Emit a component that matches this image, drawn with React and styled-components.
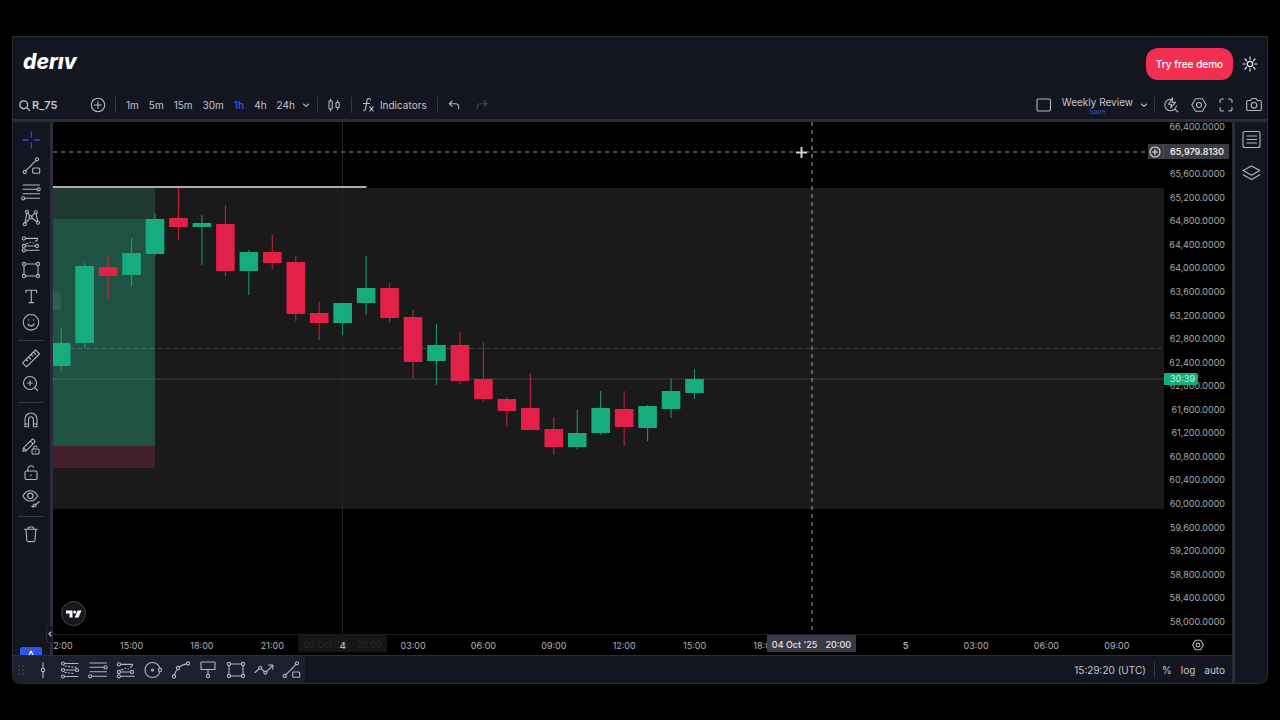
import React from "react";
import styled, { createGlobalStyle } from "styled-components";

const GlobalStyle = createGlobalStyle`
  * { box-sizing: border-box; }
  body { margin: 0; background: #000; font-family: Inter, "Liberation Sans", sans-serif; }
  button { font: inherit; color: inherit; background: none; border: 0; padding: 0; cursor: pointer; }
`;

const c = {
  panel: "#131520",
  line: "#2b2c38",
  edge: "#2a2b33",
  text: "#c3c5ce",
  icon: "#b4b7c2",
  blue: "#3350cf",
  up: "#17ac7e",
  down: "#e2204a",
};

/* ---------- shell ---------- */
const Page = styled.div`
  min-height: 100vh;
  padding: 36px 12px;
  display: flex;
  flex-direction: column;
`;
const Frame = styled.main`
  flex: 1;
  display: flex;
  flex-direction: column;
  background: ${c.panel};
  border: 1px solid ${c.edge};
  border-radius: 0 0 8px 8px;
  overflow: hidden;
  color: ${c.text};
`;
const Header = styled.header`
  height: 54px;
  padding: 0 9px 0 10px;
  display: flex;
  align-items: center;
`;
const Logo = styled.a`
  margin-right: auto;
  padding-bottom: 5px;
  color: #fff;
  text-decoration: none;
  font-size: 21px;
  line-height: 24px;
  font-weight: 800;
  font-style: italic;
`;
const DemoButton = styled.button`
  height: 32px;
  width: 87px;
  margin-right: 9px;
  border-radius: 12px;
  background: #f22f50;
  color: #fff;
  font-size: 10px;
  font-weight: 500;
`;
const IconButton = styled.button`
  width: ${(p) => p.$w || 28}px;
  height: ${(p) => p.$h || 28}px;
  color: ${(p) => p.$color || c.icon};
  display: flex;
  flex-shrink: 0;
  align-items: center;
  justify-content: center;
`;
const Toolbar = styled.div`
  height: 31px;
  display: flex;
  align-items: center;
  padding: 0 0 0 6px;
  border-bottom: 3px solid ${c.line};
  font-size: 10px;
  line-height: 14px;
`;
const SymbolButton = styled.button`
  width: 71px;
  display: flex;
  align-items: center;
  gap: 2px;
  font-size: 11px;
  font-weight: 600;
`;
const Rule = styled.span`
  width: 1px;
  height: 16px;
  flex-shrink: 0;
  background: #363945;
`;
const Intervals = styled.div`
  display: flex;
  gap: 10px;
  margin-left: 9px;
  padding-left: 10px;
  border-left: 1px solid #363945;
`;
const Interval = styled.button`
  color: ${(p) => (p.$on ? c.blue : c.text)};
  font-weight: ${(p) => (p.$on ? 600 : 400)};
  line-height: 16px;
`;
const IndicatorsButton = styled.button`
  display: flex;
  align-items: center;
  gap: 2px;
  padding: 0 10px 0 6px;
  line-height: 16px;
`;
const Spacer = styled.span`flex: 1;`;
const LayoutName = styled.button`
  padding: 2px 0 0 4px;
  display: flex;
  flex-direction: column;
  align-items: center;
  line-height: 11px;
`;
const SaveText = styled.span`
  font-size: 7px;
  line-height: 8px;
  color: ${c.blue};
`;

/* ---------- workspace ---------- */
const Workspace = styled.div`
  flex: 1;
  display: grid;
  grid-template-columns: 1fr 35px;
`;
const Left = styled.section`
  display: grid;
  grid-template-columns: 40px 1fr;
  grid-template-rows: 1fr 28px;
  min-width: 0;
`;
const ToolRail = styled.nav`
  position: relative;
  border-right: 3px solid ${c.line};
  padding-top: 5px;
  display: flex;
  flex-direction: column;
`;
const RailRule = styled.span`
  height: 1px;
  margin: 5px 7px 4px 5px;
  background: #363945;
`;
const BlueTab = styled.button`
  background: #2f55e8;
  color: #fff;
  width: 22px;
  height: 8px;
  margin: auto 0 0 7px;
  border-radius: 2px 2px 0 0;
  display: flex;
  justify-content: center;
`;
const Collapse = styled.button`
  position: absolute;
  right: -3px;
  bottom: 12px;
  width: 7px;
  height: 18px;
  background: ${c.panel};
  border: 1px solid ${c.line};
  border-radius: 3px 0 0 3px;
  display: flex;
  align-items: center;
  justify-content: center;
`;
const ChartArea = styled.div`
  position: relative;
  display: grid;
  grid-template-columns: 1fr 68px;
  grid-template-rows: 1fr 21px;
  background: #000;
  border-radius: 4px 4px 0 0;
  overflow: hidden;
  min-width: 0;
`;
const Plot = styled.div`
  position: relative;
  min-width: 0;
  overflow: hidden;
  svg.candles { display: block; width: 100%; height: 100%; }
`;
const PriceAxis = styled.div`
  display: flex;
  flex-direction: column;
  justify-content: space-between;
  padding: 1px 7px 8px 0;
  text-align: right;
  font-size: 9px;
  line-height: 8px;
  color: #a9a9ab;
  span { height: 8px; }
`;
const TimeAxis = styled.div`
  border-top: 1px solid #1d1d1f;
  overflow: hidden;
  min-width: 0;
`;
const TimeGrid = styled.div`
  display: grid;
  grid-template-columns: repeat(16, 1fr);
  margin: 0 12px 0 -27px;
  text-align: center;
  font-size: 9px;
  line-height: 21px;
  color: #b2b2b4;
`;
const TimeLabel = styled.span`
  position: relative;
  z-index: ${(p) => (p.$bold ? 2 : 0)};
  font-weight: ${(p) => (p.$bold ? 600 : 400)};
`;
const AxisCorner = styled.div`
  border-top: 1px solid #1d1d1f;
  display: flex;
  align-items: center;
  justify-content: center;
`;
const TimeBadge = styled.div`
  position: absolute;
  bottom: 3px;
  left: ${(p) => p.$x}px;
  width: 89px;
  height: 17px;
  display: flex;
  justify-content: center;
  gap: 8px;
  font-size: 9px;
  line-height: 19px;
  font-weight: ${(p) => (p.$ghost ? 400 : 500)};
  color: ${(p) => (p.$ghost ? "#29292b" : "#e6e6ea")};
  background: ${(p) => (p.$ghost ? "#161617" : "#3a3a46")};
`;
const PriceBadge = styled.div`
  position: absolute;
  top: 22px;
  right: 3px;
  height: 15px;
  display: flex;
  font-size: 9px;
  line-height: 15px;
  font-weight: 600;
  color: #e8e8e8;
  background: #3b3b40;
  span { padding: 0 5px 0 6px; border-left: 1px solid #505056; }
`;
const Countdown = styled.div`
  position: absolute;
  top: 251px;
  right: 34px;
  width: 34px;
  height: 12px;
  padding-left: 6px;
  border-radius: 0 2px 2px 0;
  font-size: 9px;
  line-height: 12px;
  color: #c4f5e3;
  background: ${c.up};
`;
const Watermark = styled.a`
  position: absolute;
  left: 8px;
  bottom: 8px;
  width: 25px;
  height: 25px;
  border-radius: 50%;
  border: 1px solid #45464c;
  background: #17181c;
  display: flex;
  align-items: center;
  justify-content: center;
`;
const BottomBar = styled.footer`
  grid-column: 1 / -1;
  border-top: 1px solid ${c.line};
  display: flex;
  align-items: center;
  font-size: 10px;
`;
const Favourites = styled.div`
  width: 292px;
  height: 100%;
  display: flex;
  align-items: center;
  background: #1c1f2c;
`;
const FavButton = styled.button`
  flex: 1;
  height: 27px;
  color: ${c.icon};
  display: flex;
  align-items: center;
  justify-content: center;
`;
const Grip = styled.span`
  width: 16px;
  display: flex;
  justify-content: center;
`;
const Clock = styled.button`padding-right: 8px;`;
const ScaleModes = styled.div`
  display: flex;
  gap: 9px;
  padding: 0 7px;
`;
const RightRail = styled.aside`
  border-left: 3px solid ${c.line};
  padding-top: 1px;
`;

/* ---------- icons ---------- */
const Svg = ({ w = 20, h = w, vb, children, sw = 1.1 }) => (
  <svg width={w} height={h} viewBox={vb || `0 0 ${w} ${h}`} fill="none" stroke="currentColor"
    strokeWidth={sw} strokeLinecap="round" strokeLinejoin="round" aria-hidden="true">
    {children}
  </svg>
);
const Dots = ({ at, r = 1.6 }) => at.map(([x, y]) => <circle key={`${x}-${y}`} cx={x} cy={y} r={r} />);

const icons = {
  cross: <path d="M2 10h5M13.5 10h5M10.3 2v5M10.3 13v5" strokeWidth="1.3" />,
  trend: <><Dots at={[[3.7, 16], [16, 3.3]]} /><path d="M5 14.7 14.8 4.6" /><rect x="11.7" y="12" width="7" height="5.3" rx="1" /></>,
  fib: <><path d="M2 3h16.5M2 7.3h14M2 11.7h16.5M3.8 16.3h14.7" /><Dots at={[[17.6, 7.3], [2.2, 16.3]]} /></>,
  pattern: <><Dots at={[[6, 3.7], [14.7, 4.3], [9.6, 9.2], [3.7, 16.3], [17, 14.7]]} r={1.5} /><path d="M5.8 5.2 4 14.8M6.8 5 8.8 7.9M13.5 5.3l-2.8 2.8M15 5.8l1.700 7.400M11 10l4.800 3.800M8.700 10.400l-4.100 4.800" /></>,
  forecast: <><Dots at={[[2.9, 4.4], [2.9, 12], [16, 12], [2.9, 16.3]]} /><path d="M4.6 4.4h12M4.6 12h9.800M4.6 16.3h13.600" /><path d="M5 9.500l2 .2M9 8.500l.5-.2M12 8.800l.5.2M14.500 7.200l2-1.500" /></>,
  rect: <><Dots at={[[3, 4], [17, 4], [3, 16], [17, 16]]} /><path d="M4.6 4h10.8M4.6 16h10.8M3 5.6v8.8M17 5.6v8.8" /></>,
  text: <path d="M5 6.5V4.3h10.600v2.200M10.300 4.300V16.600M8 16.600h4.600" />,
  smile: <><circle cx="10" cy="10.3" r="7.8" /><path d="M7 12c.6 1.400 1.700 2 3 2s2.400-.6 3-2M7.600 8h.01M12.400 8h.01" strokeWidth="1.3" /></>,
  ruler: <path d="M1.5 14.9 14.5 2l4 4L5.5 18.8zM5 11.5l1.5 1.5M7.5 9l2.2 2.2M10 6.5 11.5 8M12.5 4.1l2.2 2.2" />,
  zoom: <><circle cx="9" cy="9" r="6.5" /><path d="m13.700 13.700 3 3M9 6.500v5M6.500 9h5" /></>,
  magnet: <path d="M4 16.800V9a6 6 0 0 1 12 0v7.800h-3.600V9.200a2.400 2.400 0 0 0-4.800 0v7.600zM4 14h3.600M12.400 14H16" />,
  pencilLock: <><path d="M1.900 15.200l.6-3.400L10.800 3.600a1.300 1.300 0 0 1 1.800 0l1 1a1.300 1.300 0 0 1 0 1.800L5.400 14.600zM9.300 5.100l2.800 2.800M2.500 11.800l2.900 2.800" /><rect x="11" y="13" width="7" height="5" rx="1" /><path d="M12.700 13v-1.500a1.700 1.700 0 0 1 3.200-.6M14.500 15.200v.6" /></>,
  lock: <><rect x="4" y="9" width="12" height="8.500" rx="1.500" /><path d="M6.800 9V7a3.200 3.200 0 0 1 5.900-1.700M10 12.800v1" /></>,
  eye: <><path d="M1.900 8c2-3.500 4.600-5.200 7.400-5.200S14.700 4.500 16.700 8c-2 3.300-4.600 5-7.400 5S3.900 11.300 1.900 8z" /><circle cx="9.300" cy="7.800" r="2.700" /><path d="M18.300 13.600l-3.500 2.900M10.800 18.600c1.400-.1 1.400-1.600 2.400-2.300.9-.5 2 .3 1.800 1.200-.3 1.200-2.500 1.700-4.200 1.100z" /></>,
  trash: <path d="M3.400 5.300h13M7.200 5.300V4c0-.6.400-1 1-1h3.400c.6 0 1 .4 1 1v1.300M5 5.300l.8 11c.1.800.6 1.300 1.300 1.300h5.600c.7 0 1.200-.5 1.300-1.300l.8-11" />,
  vline: <><path d="M10 2.500v5.700M10 11.600v6" /><circle cx="10" cy="9.900" r="1.700" /></>,
  fibTrend: <><Dots at={[[3, 3.5], [17, 10], [3, 10], [3, 16.5]]} r={1.5} /><path d="M4.600 3.500H18M4.600 10h10.900M4.600 16.500H18" /><path d="M5 6l11 1.500M5 12.500l9 1" strokeDasharray="1.200 2.200" /></>,
  arc: <><Dots at={[[17, 3.5], [7, 8], [3, 16.5]]} /><path d="M15.400 3.900C12.400 4.500 10 5.600 8.400 7M6.200 9.500C4.800 11.300 3.900 13 3.400 15" /></>,
  circle: <><circle cx="9.500" cy="10" r="7.500" /><circle cx="17" cy="10" r="1.600" fill="#1c1f2c" /><circle cx="9.500" cy="10" r="1" /></>,
  callout: <><rect x="3" y="2" width="14" height="7.500" rx=".5" /><path d="M10 9.500v5" /><circle cx="10" cy="16.200" r="1.600" /></>,
  path: <><path d="M1 12.500 5 9M7.400 8.600l2.800 3M12.600 11.600 18.500 5.500M14.500 5h4.300v4.300" /><Dots at={[[6.2, 7.7], [11.4, 12.6]]} r={1.5} /></>,
};
const Icon = ({ name }) => <Svg>{icons[name]}</Svg>;

const Chevron = () => <Svg w={8}><path d="M1.500 3 4 5.300 6.500 3" /></Svg>;
const Hexagon = ({ w = 16 }) => (
  <Svg w={w} vb="0 0 16 16" sw={w < 16 ? 1.5 : 1.1}>
    <path d="M4.600 1.700h6.800L15.200 8l-3.800 6.300H4.600L.8 8z" /><circle cx="8" cy="8" r="2.500" />
  </Svg>
);

/* ---------- data ---------- */
const UP = true, DN = false;
// direction, body top, body bottom, wick top, wick bottom
const candles = [
  [UP, 343, 366, 328, 371], [UP, 266, 343, 263, 348], [DN, 267, 276, 256, 300], [UP, 253, 275, 238, 286],
  [UP, 219, 254, 213, 255], [DN, 218, 227, 188, 240], [UP, 223, 227, 215, 265], [DN, 224, 271, 205, 276],
  [UP, 252, 271, 250, 295], [DN, 252, 263, 235, 269], [DN, 262, 314, 256, 321], [DN, 313, 323, 302, 340],
  [UP, 303, 323, 303, 335], [UP, 288, 303, 256, 315], [DN, 288, 318, 283, 323], [DN, 317, 362, 310, 378],
  [UP, 345, 361, 324, 385], [DN, 345, 381, 332, 384], [DN, 379, 399, 342, 402], [DN, 399, 411, 397, 427],
  [DN, 408, 430, 373, 430], [DN, 429, 447, 417, 455], [UP, 433, 447, 410, 449], [UP, 408, 433, 391, 435],
  [DN, 409, 427, 391, 446], [UP, 406, 428, 405, 441], [UP, 391, 409, 379, 418], [UP, 379, 393, 369, 399],
];
const prices = Array.from({ length: 22 }, (_, i) => 66400 - i * 400);
const times = ["12:00", "15:00", "18:00", "21:00", "4", "03:00", "06:00", "09:00", "12:00", "15:00", "18:00", "", "5", "03:00", "06:00", "09:00"];
const railGroups = [
  [["cross", "Crosshair"], ["trend", "Trend line"], ["fib", "Fibonacci"], ["pattern", "Patterns"], ["forecast", "Forecasting"], ["rect", "Shapes"], ["text", "Text"], ["smile", "Icons"]],
  [["ruler", "Measure"], ["zoom", "Zoom in"]],
  [["magnet", "Magnet"], ["pencilLock", "Stay in drawing mode"], ["lock", "Lock drawings"], ["eye", "Hide drawings"]],
  [["trash", "Remove"]],
];
const favourites = ["vline", "fibTrend", "fib", "forecast", "circle", "arc", "callout", "rect", "path", "trend"];

const Candles = () => (
  <svg className="candles" viewBox="53 122 1111 512" preserveAspectRatio="none" role="img" aria-label="Candlestick chart">
    <rect x="53" y="188" width="1111" height="321" fill="#1a1a1a" />
    <rect x="53" y="188" width="102" height="31" fill="#203a31" />
    <rect x="53" y="219" width="102" height="227" fill="#1f5243" />
    <rect x="53" y="446" width="102" height="22" fill="#43202a" />
    <rect x="50" y="292" width="11" height="18" rx="3" fill="#2c6152" />
    <path d="M342.500 122V634" stroke="#242424" />
    <path d="M53 348.500H1164" stroke="#fff" strokeOpacity=".17" strokeDasharray="5 3" />
    <path d="M53 379H1164" stroke="#17ac7e" strokeOpacity=".75" strokeDasharray="1 1" />
    <path d="M53 187H366.500" stroke="#e4e4e4" strokeWidth="1.700" />
    {candles.map(([up, top, bottom, high, low], i) => {
      const x = 61.2 + i * 23.456;
      const color = up ? c.up : c.down;
      return (
        <g key={i}>
          <path d={`M${x} ${high}V${low}`} stroke={color} strokeOpacity=".85" strokeWidth="1.1" />
          <rect x={x - 9.3} y={top} width="18.6" height={bottom - top} fill={color} />
        </g>
      );
    })}
    <g stroke="#8d8d8d" strokeWidth="1.2" strokeDasharray="4 4">
      <path d="M53 152H1148" />
      <path d="M812 122V634" />
    </g>
    <path d="M796 152.500h11M801.500 147v11" stroke="#000" strokeWidth="4" />
    <path d="M796 152.500h11M801.500 147v11" stroke="#d0d0d0" strokeWidth="2" />
  </svg>
);

export default function App() {
  return (
    <>
      <GlobalStyle />
      <Page>
        <Frame>
          <Header>
            <Logo href="#" aria-label="deriv">derıv</Logo>
            <DemoButton>Try free demo</DemoButton>
            <IconButton $w={16} aria-label="Theme" $color="#eceef2">
              <Svg w={16} sw={1.2}>
                <circle cx="8" cy="8" r="2.700" />
                <path d="M8 1v2.200M8 12.800V15M1 8h2.200M12.800 8H15M3 3l1.600 1.600M11.400 11.400 13 13M3 13l1.600-1.600M11.400 4.600 13 3" />
              </Svg>
            </IconButton>
          </Header>

          <Toolbar>
            <SymbolButton>
              <Svg w={11} sw={1.3}><circle cx="4.700" cy="4.700" r="3.900" /><path d="m7.600 7.600 2.800 2.800" /></Svg>
              R_75
            </SymbolButton>
            <IconButton $w={16} aria-label="Compare">
              <Svg w={16}><circle cx="8" cy="8" r="6.700" /><path d="M8 4.500v7M4.500 8h7" /></Svg>
            </IconButton>
            <Intervals>
              {["1m", "5m", "15m", "30m", "1h", "4h", "24h"].map((t) => (
                <Interval key={t} $on={t === "1h"}>{t}</Interval>
              ))}
            </Intervals>
            <IconButton $w={22} aria-label="More intervals"><Chevron /></IconButton>
            <Rule />
            <IconButton $w={33} aria-label="Chart type">
              <Svg w={14}><rect x="2" y="3" width="3.200" height="8" rx=".5" /><rect x="9" y="4.500" width="3.200" height="5" rx=".5" /><path d="M3.600 1v2M3.600 11v2M10.600 2.500v2M10.600 9.500v2" /></Svg>
            </IconButton>
            <Rule />
            <IndicatorsButton>
              <Svg w={20} h={16}><path d="M12.500 2.800c-.4-.9-1-1.300-1.700-1.300-1 0-1.600.7-1.800 2L7.600 11.600c-.2 1.300-.8 2-1.800 2M5.600 6.500h6M11.800 9.800l3.400 4.200M15.200 9.800l-3.400 4.200" /></Svg>
              Indicators
            </IndicatorsButton>
            <Rule />
            <IconButton $w={33} aria-label="Undo">
              <Svg w={12}><path d="M4 2 1.300 4.700 4 7.400M1.300 4.700h6.200a3.200 3.200 0 0 1 3.200 3.200v1.900" /></Svg>
            </IconButton>
            <IconButton $w={22} aria-label="Redo" $color="#454854">
              <Svg w={12}><path d="m8 2 2.700 2.700L8 7.400M10.700 4.700H4.500a3.200 3.200 0 0 0-3.200 3.200v1.900" /></Svg>
            </IconButton>
            <Spacer />
            <IconButton $w={28} aria-label="Layout">
              <Svg w={16}><rect x="1" y="2" width="13.500" height="12" rx="1.200" /></Svg>
            </IconButton>
            <LayoutName>Weekly Review<SaveText>Save</SaveText></LayoutName>
            <IconButton $w={21} aria-label="Manage layouts"><Chevron /></IconButton>
            <Rule />
            <IconButton $w={31} aria-label="Quick search">
              <Svg w={16}><path d="M7.500 2.200a5.800 5.800 0 1 0 5.900 6.500M11.600 12l3.400 3M9.500.8 5.600 7.200h3L7.600 10.800 12.600 5.400H9.300z" /></Svg>
            </IconButton>
            <IconButton $w={26} aria-label="Settings"><Hexagon /></IconButton>
            <IconButton $w={28} aria-label="Fullscreen">
              <Svg w={14}><path d="M1 4.500V3a2 2 0 0 1 2-2h1.500M9.500 1H11a2 2 0 0 1 2 2v1.500M13 9.500V11a2 2 0 0 1-2 2H9.500M4.500 13H3a2 2 0 0 1-2-2V9.500" /></Svg>
            </IconButton>
            <IconButton $w={27} aria-label="Snapshot">
              <Svg w={18} h={16}><path d="M5.700 3.500 7 1.500h4l1.300 2H15c.8 0 1.300.5 1.300 1.300v7.400c0 .8-.5 1.300-1.300 1.300H3c-.8 0-1.300-.5-1.300-1.300V4.800c0-.8.500-1.300 1.300-1.300z" /><circle cx="9" cy="8.300" r="2.800" /></Svg>
            </IconButton>
          </Toolbar>

          <Workspace>
            <Left>
              <ToolRail>
                {railGroups.map((group, g) => (
                  <React.Fragment key={g}>
                    {g > 0 && <RailRule />}
                    {group.map(([name, label]) => (
                      <IconButton key={name} $w={36} $h={26} aria-label={label} $color={name === "cross" ? c.blue : undefined}>
                        <Icon name={name} />
                      </IconButton>
                    ))}
                  </React.Fragment>
                ))}
                <BlueTab aria-label="Favourites">
                  <Svg w={8} h={8}><path d="M2 8 4 4l2 4" /></Svg>
                </BlueTab>
                <Collapse aria-label="Collapse">
                  <Svg w={4} h={6}><path d="M3 1 1 3l2 2" /></Svg>
                </Collapse>
              </ToolRail>

              <ChartArea>
                <Plot>
                  <Candles />
                  <Watermark href="#" aria-label="TradingView">
                    <svg width="17" height="10" viewBox="0 0 17 10" fill="#fff" aria-hidden="true">
                      <path d="M1 1.500h6.500v7H4.500V4.500H1z" /><circle cx="9.700" cy="3" r="1.500" /><path d="M12.700 1.500H16.500l-3 7H9.700z" />
                    </svg>
                  </Watermark>
                </Plot>
                <PriceAxis>
                  {prices.map((p) => (
                    <span key={p}>{p === 66000 ? "" : `${p.toLocaleString("en-US")}.0000`}</span>
                  ))}
                </PriceAxis>
                <TimeAxis>
                  <TimeBadge $x={245} $ghost><span>03 Oct '25</span><span>20:00</span></TimeBadge>
                  <TimeGrid>
                    {times.map((t, i) => <TimeLabel key={i} $bold={t.length === 1}>{t}</TimeLabel>)}
                  </TimeGrid>
                  <TimeBadge $x={714}><span>04 Oct '25</span><span>20:00</span></TimeBadge>
                </TimeAxis>
                <AxisCorner>
                  <IconButton $w={20} $h={16} aria-label="Axis settings"><Hexagon w={12} /></IconButton>
                </AxisCorner>
                <PriceBadge>
                  <IconButton $w={15} $h={15} $color="#e8e8e8" aria-label="Add alert">
                    <Svg w={12}><circle cx="6" cy="6" r="5" /><path d="M6 3.500v5M3.500 6h5" /></Svg>
                  </IconButton>
                  <span>65,979.8130</span>
                </PriceBadge>
                <Countdown>30:39</Countdown>
              </ChartArea>

              <BottomBar>
                <Favourites>
                  <Grip>
                    <svg width="6" height="10" viewBox="0 0 6 10" fill="#5a5d69" aria-hidden="true">
                      {[1, 5, 9].map((y) => <g key={y}><circle cx="1" cy={y} r=".8" /><circle cx="5" cy={y} r=".8" /></g>)}
                    </svg>
                  </Grip>
                  {favourites.map((name) => (
                    <FavButton key={name} aria-label={name}><Icon name={name} /></FavButton>
                  ))}
                </Favourites>
                <Spacer />
                <Clock>15:29:20 (UTC)</Clock>
                <Rule />
                <ScaleModes>
                  <button>%</button>
                  <button>log</button>
                  <button>auto</button>
                </ScaleModes>
              </BottomBar>
            </Left>

            <RightRail>
              <IconButton $w={32} $h={33} aria-label="Watchlist">
                <Svg w={20}><rect x="2" y="1.500" width="17" height="16" rx="2" /><path d="M6 6h9.500M6 9.500h9.500M6 13h9.500" /></Svg>
              </IconButton>
              <IconButton $w={32} $h={33} aria-label="Object tree">
                <Svg w={20}><path d="M10.500 3l8.300 4.600-8.300 4.700-8.300-4.700zM2.200 11.800l8.300 4.700 8.300-4.700" /></Svg>
              </IconButton>
            </RightRail>
          </Workspace>
        </Frame>
      </Page>
    </>
  );
}
